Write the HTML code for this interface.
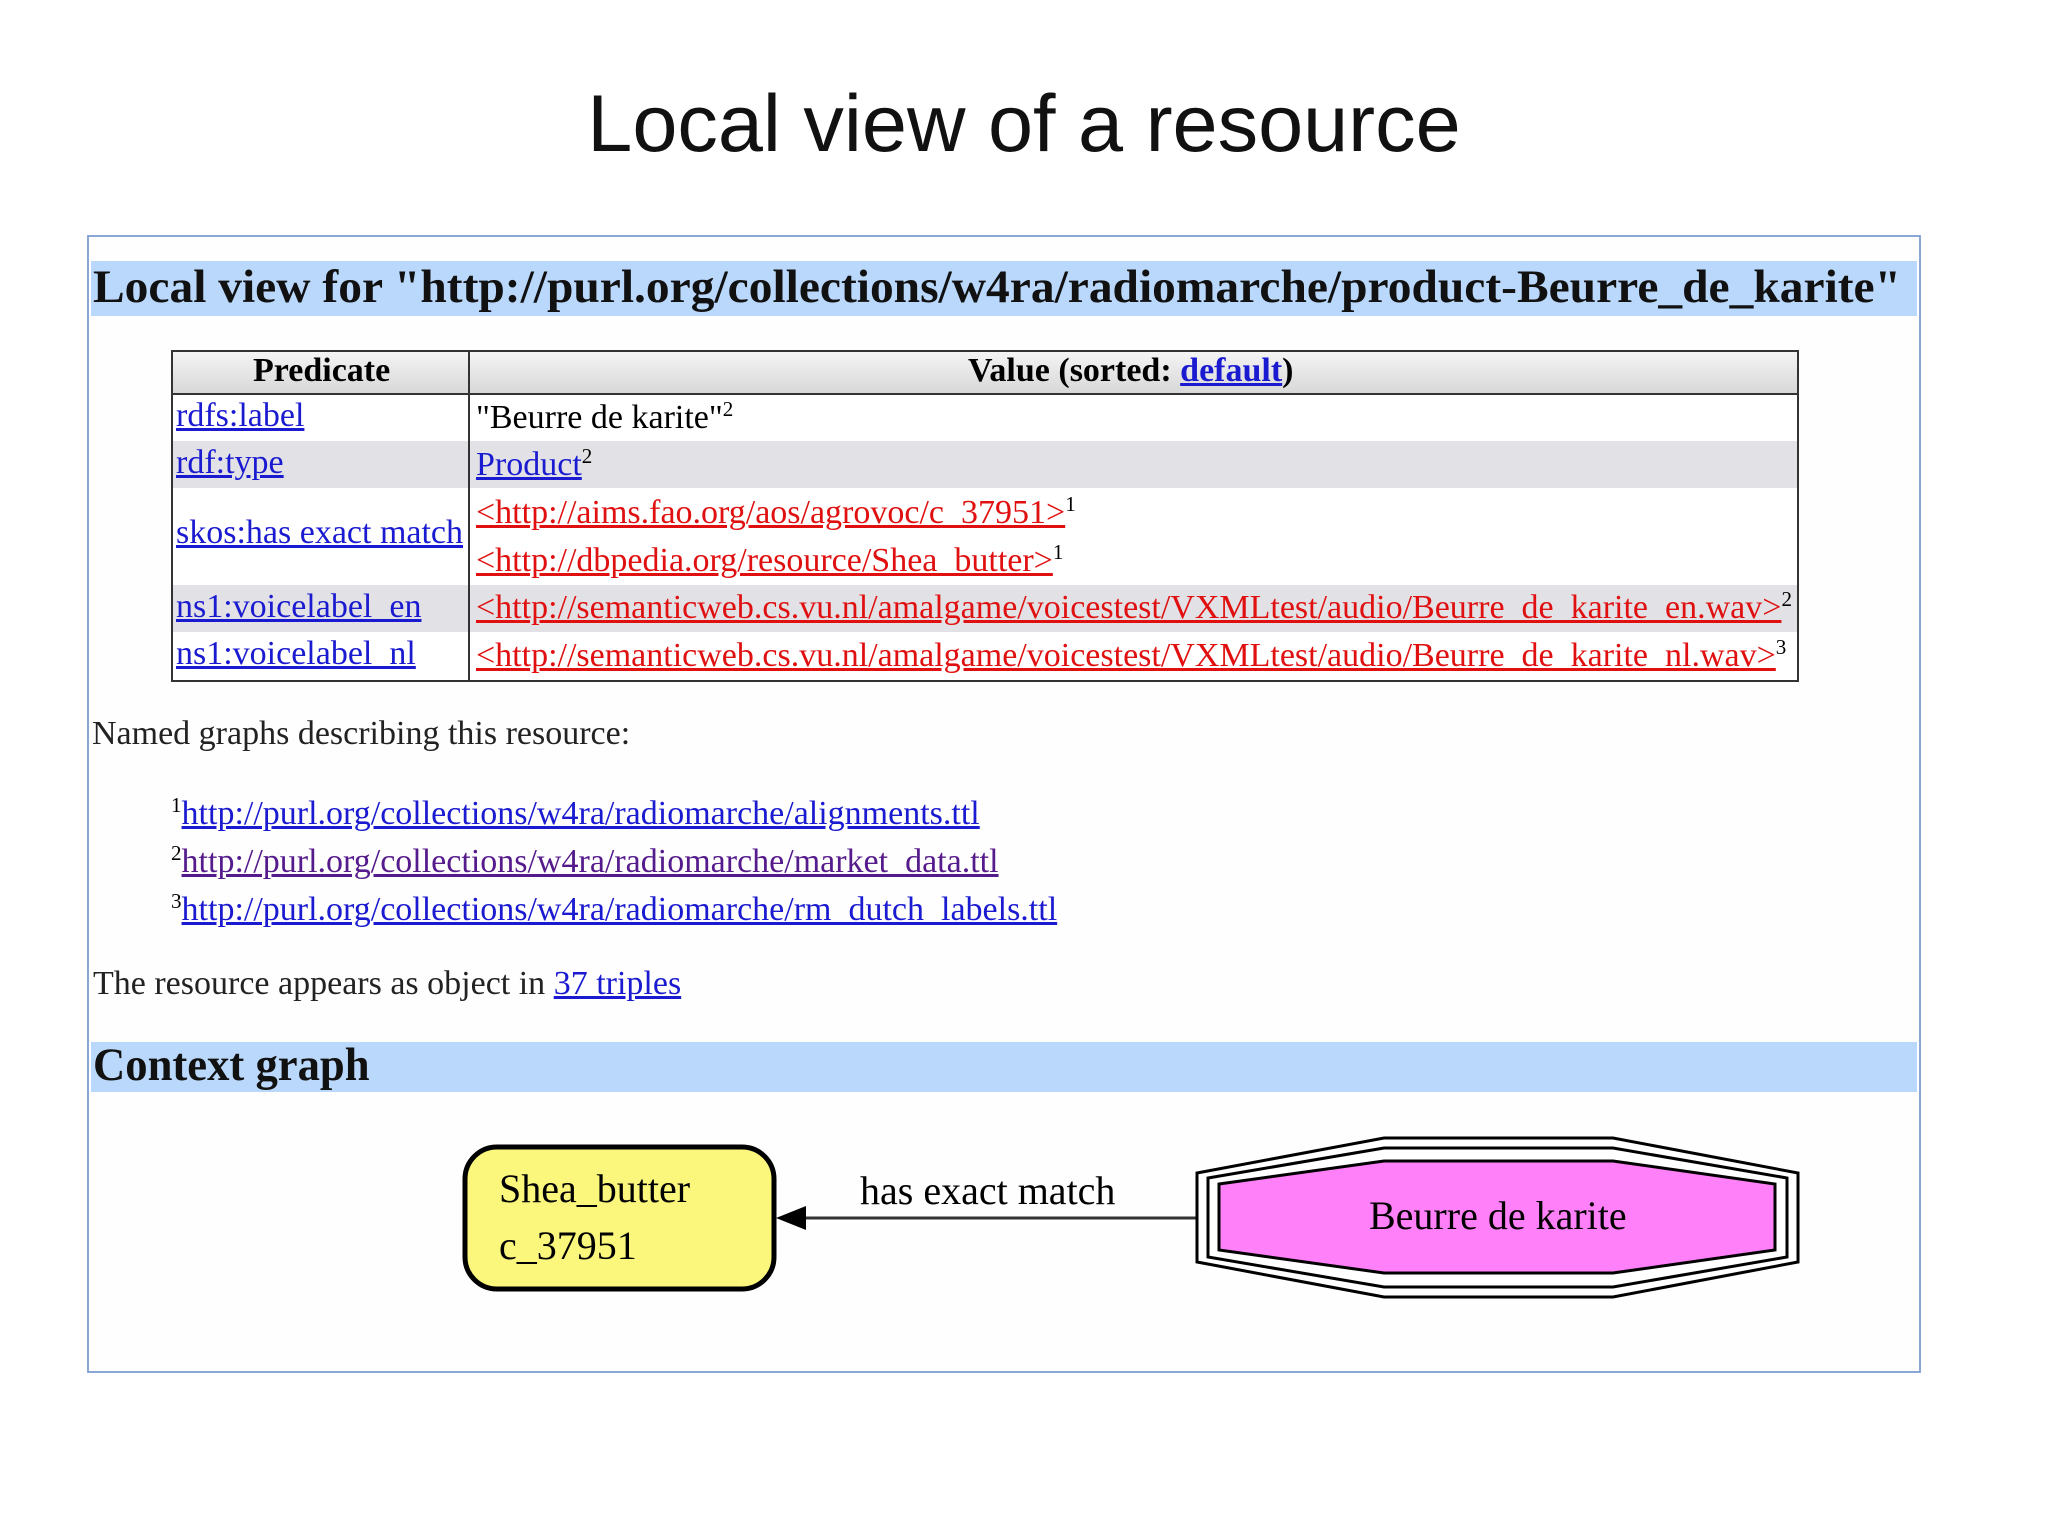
<!DOCTYPE html>
<html><head><meta charset="utf-8"><style>
body{margin:0;width:2048px;height:1536px;background:#fff;position:relative;overflow:hidden;font-family:"Liberation Serif",serif}
.a{position:absolute;white-space:nowrap;transform-origin:0 0}
.c{transform:scaleX(1)}
a{color:#1a1ad0;text-decoration:underline}
.r{color:#e01010}
sup{font-size:0.62em;vertical-align:0;position:relative;top:-0.55em}
</style></head><body>
<div class="a" style="left:0;width:2048px;top:78px;text-align:center;font-family:'Liberation Sans',sans-serif;font-size:81px;color:#111">Local view of a resource</div>
<div style="position:absolute;left:87px;top:235px;width:1830px;height:1134px;border:2px solid #8aa6d2;background:#fefefe"></div>
<div style="position:absolute;left:91px;top:261px;width:1826px;height:55px;background:#bad8fb"></div>
<div class="a" style="left:93px;top:260px;font-size:47px;font-weight:bold;color:#111;transform:scaleX(1.01)">Local view for "http://purl.org/collections/w4ra/radiomarche/product-Beurre_de_karite"</div>

<div style="position:absolute;left:171px;top:350px;width:1624px;height:328px;border:2px solid #333;background:#fff"></div>
<div style="position:absolute;left:173px;top:352px;width:1624px;height:41px;background:linear-gradient(#f4f4f4,#d8d8d8);border-bottom:2px solid #333"></div>
<div style="position:absolute;left:173px;top:441px;width:1624px;height:47px;background:#e2e2e6"></div>
<div style="position:absolute;left:173px;top:585px;width:1624px;height:47px;background:#e2e2e6"></div>
<div style="position:absolute;left:468px;top:352px;width:2px;height:328px;background:#333"></div>
<div class="a c" style="left:253px;top:352px;font-size:34px;font-weight:bold">Predicate</div>
<div class="a c" style="left:968px;top:352px;font-size:34px;font-weight:bold">Value (sorted: <a>default</a>)</div>

<div class="a c" style="left:176px;top:397px;font-size:34px"><a>rdfs:label</a></div>
<div class="a c" style="left:176px;top:444px;font-size:34px"><a>rdf:type</a></div>
<div class="a c" style="left:176px;top:514px;font-size:34px"><a>skos:has exact match</a></div>
<div class="a c" style="left:176px;top:588px;font-size:34px"><a>ns1:voicelabel_en</a></div>
<div class="a c" style="left:176px;top:635px;font-size:34px"><a>ns1:voicelabel_nl</a></div>

<div class="a c" style="left:476px;top:399px;font-size:34px">"Beurre de karite"<sup>2</sup></div>
<div class="a c" style="left:476px;top:446px;font-size:34px"><a>Product</a><sup>2</sup></div>
<div class="a c" style="left:476px;top:494px;font-size:34px"><a class="r">&lt;http://aims.fao.org/aos/agrovoc/c_37951&gt;</a><sup>1</sup></div>
<div class="a c" style="left:476px;top:542px;font-size:34px"><a class="r">&lt;http://dbpedia.org/resource/Shea_butter&gt;</a><sup>1</sup></div>
<div class="a c" style="left:476px;top:589px;font-size:34px"><a class="r">&lt;http://semanticweb.cs.vu.nl/amalgame/voicestest/VXMLtest/audio/Beurre_de_karite_en.wav&gt;</a><sup>2</sup></div>
<div class="a c" style="left:476px;top:637px;font-size:34px"><a class="r">&lt;http://semanticweb.cs.vu.nl/amalgame/voicestest/VXMLtest/audio/Beurre_de_karite_nl.wav&gt;</a><sup>3</sup></div>

<div class="a c" style="left:92px;top:715px;font-size:34px;color:#222">Named graphs describing this resource:</div>
<div class="a c" style="left:171px;top:795px;font-size:34px"><sup>1</sup><a>http://purl.org/collections/w4ra/radiomarche/alignments.ttl</a></div>
<div class="a c" style="left:171px;top:843px;font-size:34px"><sup>2</sup><a style="color:#551a8b">http://purl.org/collections/w4ra/radiomarche/market_data.ttl</a></div>
<div class="a c" style="left:171px;top:891px;font-size:34px"><sup>3</sup><a>http://purl.org/collections/w4ra/radiomarche/rm_dutch_labels.ttl</a></div>
<div class="a c" style="left:93px;top:965px;font-size:34px;color:#222">The resource appears as object in <a>37 triples</a></div>

<div style="position:absolute;left:91px;top:1042px;width:1826px;height:50px;background:#bad8fb"></div>
<div class="a" style="left:93px;top:1038px;font-size:47px;font-weight:bold;color:#111;transform:scaleX(0.95)">Context graph</div>

<svg style="position:absolute;left:0;top:0" width="2048" height="1536">
<rect x="465" y="1147" width="309" height="142" rx="32" fill="#fbf67c" stroke="#000" stroke-width="5"/>
<line x1="800" y1="1218" x2="1197" y2="1218" stroke="#333" stroke-width="3"/>
<polygon points="776,1218 806,1206 806,1230" fill="#000"/>
<polygon points="1197,1173 1384,1138 1613,1138 1798,1173 1798,1262 1613,1297 1384,1297 1197,1262" fill="#fff" stroke="#000" stroke-width="3"/>
<polygon points="1208,1178 1384,1148 1613,1148 1787,1178 1787,1257 1613,1287 1384,1287 1208,1257" fill="#fff" stroke="#000" stroke-width="3"/>
<polygon points="1219,1184 1384,1161 1613,1161 1775,1184 1775,1250 1613,1273 1384,1273 1219,1250" fill="#ff80f8" stroke="#000" stroke-width="3"/>
</svg>
<div class="a c" style="left:499px;top:1165px;font-size:40px">Shea_butter</div>
<div class="a c" style="left:499px;top:1222px;font-size:40px">c_37951</div>
<div class="a c" style="left:860px;top:1167px;font-size:40px">has exact match</div>
<div class="a c" style="left:1369px;top:1192px;font-size:40px">Beurre de karite</div>
</body></html>
